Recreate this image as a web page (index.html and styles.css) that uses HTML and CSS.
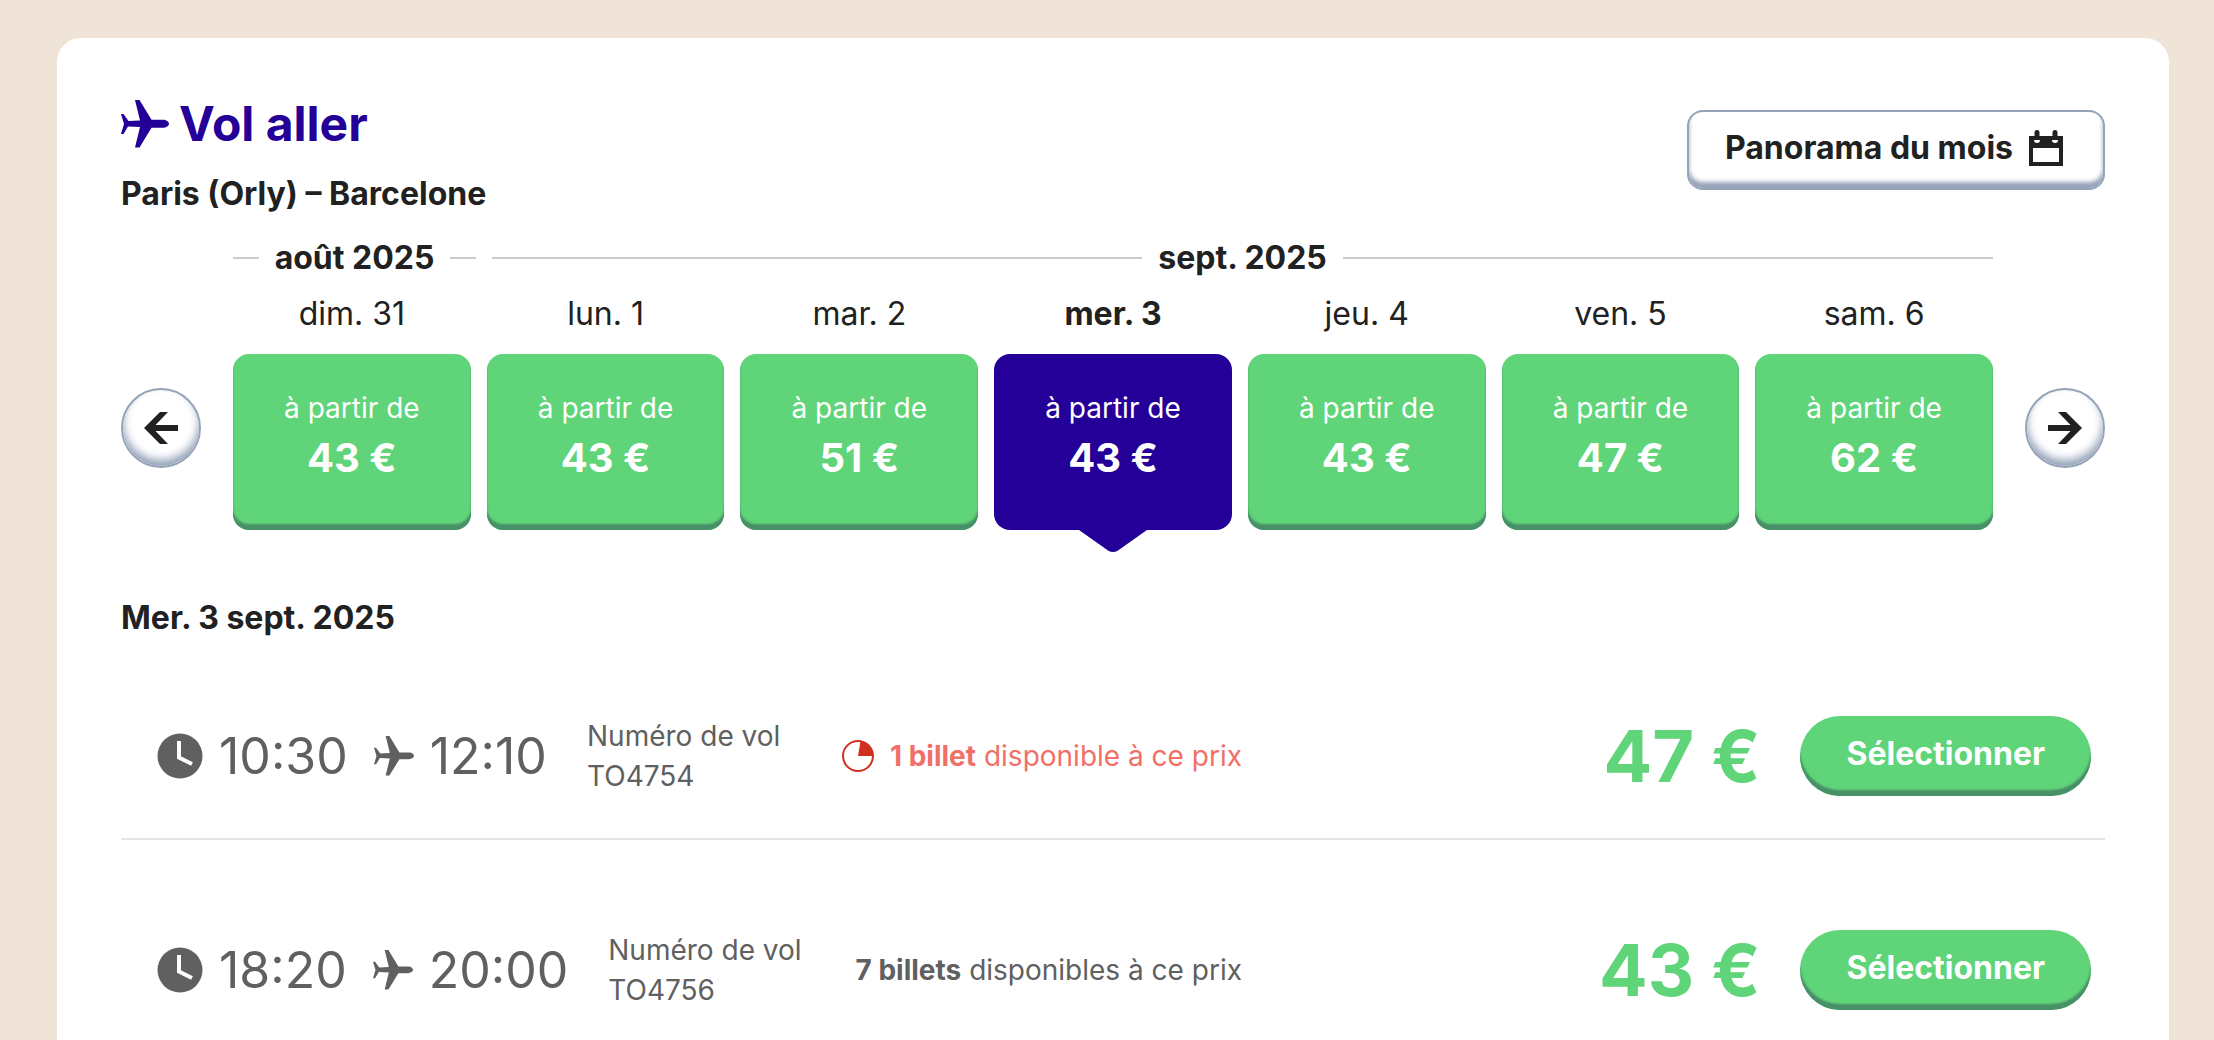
FILE: index.html
```html
<!DOCTYPE html>
<html lang="fr">
<head>
  <meta charset="UTF-8">
  <meta name="viewport" content="width=device-width, initial-scale=1.0">
  <title>Vol aller</title>
  <link rel="stylesheet" href="styles.css">
</head>
<body>
  <!-- Shared icons -->
  <svg class="sprite" aria-hidden="true">
    <symbol id="plane" viewBox="0 0 48 48">
      <path d="M14 0h4.500L30.500 19.800 42 19.800C45 19.900 48 21.500 48 23.800S45 27.700 42 27.800H30.500L18.500 47.500H14L19 27 7 26.400 2.500 34H0L3 24 0 14H2.500L7.500 21 19 20.400z"/>
    </symbol>
    <symbol id="clock" viewBox="0 0 46 46">
      <circle cx="23" cy="23" r="22.500"/>
      <path d="M22 8v16.500L35 31" fill="none" stroke="#fff" stroke-width="4"/>
    </symbol>
  </svg>

  <main class="card">
    <header class="header">
      <div>
        <h1><svg class="plane-big" aria-hidden="true"><use href="#plane"/></svg>Vol aller</h1>
        <p class="route">Paris (Orly) – Barcelone</p>
      </div>
      <button class="btn-month" type="button">
        Panorama du mois
        <svg viewBox="0 0 34 36" aria-hidden="true">
          <path fill-rule="evenodd" d="M0 6h34v30H0zM4 18v14h26V18z"/>
          <path d="M5 10a3 3 0 0 0 6 0M23 10a3 3 0 0 0 6 0" fill="#fff"/>
          <path d="M5.500 2.500a2.500 2.500 0 0 1 5 0V10h-5zM23.500 2.500a2.500 2.500 0 0 1 5 0V10h-5z"/>
        </svg>
      </button>
    </header>

    <section class="calendar">
      <button class="arrow" type="button" aria-label="Jours précédents">
        <svg viewBox="0 0 34 34" aria-hidden="true"><path d="M34 14v6H11.500L24 33h-8L0 17 16 1h8L11.500 14z"/></svg>
      </button>
      <div class="week">
        <div class="months">
          <div class="month">août 2025</div>
          <div class="month">sept. 2025</div>
        </div>
        <div class="days">
          <div class="day">
            <span class="day-name">dim. 31</span>
            <button class="fare" type="button">à partir de <strong>43 €</strong></button>
          </div>
          <div class="day">
            <span class="day-name">lun. 1</span>
            <button class="fare" type="button">à partir de <strong>43 €</strong></button>
          </div>
          <div class="day">
            <span class="day-name">mar. 2</span>
            <button class="fare" type="button">à partir de <strong>51 €</strong></button>
          </div>
          <div class="day selected">
            <span class="day-name">mer. 3</span>
            <button class="fare" type="button">à partir de <strong>43 €</strong>
              <svg class="pointer" viewBox="0 0 68 22" aria-hidden="true"><path d="M0 0h68L39 20.500q-5 3-10 0z"/></svg>
            </button>
          </div>
          <div class="day">
            <span class="day-name">jeu. 4</span>
            <button class="fare" type="button">à partir de <strong>43 €</strong></button>
          </div>
          <div class="day">
            <span class="day-name">ven. 5</span>
            <button class="fare" type="button">à partir de <strong>47 €</strong></button>
          </div>
          <div class="day">
            <span class="day-name">sam. 6</span>
            <button class="fare" type="button">à partir de <strong>62 €</strong></button>
          </div>
        </div>
      </div>
      <button class="arrow" type="button" aria-label="Jours suivants">
        <svg viewBox="0 0 34 34" aria-hidden="true"><path d="M0 14v6h22.500L10 33h8l16-16L18 1h-8l12.500 13z"/></svg>
      </button>
    </section>

    <h2>Mer. 3 sept. 2025</h2>

    <ul class="flights">
      <li class="flight">
        <div class="info">
          <div class="times">
            <svg class="clock" aria-hidden="true"><use href="#clock"/></svg>
            <span>10:30</span>
            <svg class="plane" aria-hidden="true"><use href="#plane"/></svg>
            <span>12:10</span>
          </div>
          <div class="number">Numéro de vol<br>TO4754</div>
          <div class="tickets last">
            <svg viewBox="0 0 32 32" aria-hidden="true">
              <circle cx="16" cy="16" r="15"/>
              <path d="M16 16L18.500 1A15 15 0 0 1 31 16z"/>
            </svg>
            <span><strong>1 billet</strong> disponible à ce prix</span>
          </div>
        </div>
        <div class="price">47 €</div>
        <button class="btn-select" type="button">Sélectionner</button>
      </li>
      <li class="flight">
        <div class="info">
          <div class="times">
            <svg class="clock" aria-hidden="true"><use href="#clock"/></svg>
            <span>18:20</span>
            <svg class="plane" aria-hidden="true"><use href="#plane"/></svg>
            <span>20:00</span>
          </div>
          <div class="number">Numéro de vol<br>TO4756</div>
          <div class="tickets">
            <span><strong>7 billets</strong> disponibles à ce prix</span>
          </div>
        </div>
        <div class="price">43 €</div>
        <button class="btn-select" type="button">Sélectionner</button>
      </li>
    </ul>
  </main>
</body>
</html>
```
FILE: styles.css
```css
* {
  box-sizing: border-box;
}
body {
  margin: 0;
  padding: 38px 45px 0 57px;
  background-color: #f0e4d8;
  color: #212121;
  font-family: Inter, "Open Sans", sans-serif;
  font-size: 32px;
  line-height: 40px;
}
h1, h2, p, ul {
  margin: 0;
  padding: 0;
}
button {
  border: none;
  font: inherit;
  color: inherit;
  cursor: pointer;
}
svg {
  flex-shrink: 0;
  fill: currentColor;
}
.sprite {
  display: none;
}
.card {
  background-color: #fff;
  border-radius: 24px;
  padding: 56px 64px 64px;
}

/* Header */
.header {
  display: flex;
  justify-content: space-between;
  align-items: center;
}
h1 {
  display: flex;
  align-items: center;
  gap: 10px;
  color: #240099;
  font-size: 48px;
  line-height: 60px;
}
.plane-big {
  width: 48px;
  height: 48px;
}
.route {
  margin-top: 20px;
  font-weight: 700;
}
.btn-month {
  display: flex;
  align-items: center;
  gap: 16px;
  height: 80px;
  margin-bottom: 8px;
  padding: 0 40px 4px 36px;
  background-color: #fff;
  border: 2px solid #94a3b8;
  border-radius: 16px;
  box-shadow: inset 0 -6px 4px #94a3b8;
  font-weight: 700;
}
.btn-month svg {
  width: 34px;
  height: 36px;
}

/* Days */
.calendar {
  display: flex;
  align-items: flex-end;
  gap: 32px;
  margin-top: 24px;
}
.arrow {
  display: flex;
  align-items: center;
  justify-content: center;
  flex-shrink: 0;
  width: 80px;
  height: 80px;
  margin-bottom: 62px;
  padding: 0;
  background-color: #fff;
  border: 2px solid #94a3b8;
  border-radius: 50%;
  box-shadow: inset 0 -6px 8px #94a3b8;
}
.arrow svg {
  width: 34px;
  height: 34px;
}
.week {
  flex: 1;
}
.months {
  display: grid;
  grid-template-columns: 243px 1fr;
  gap: 16px;
}
.month {
  display: flex;
  align-items: center;
  gap: 16px;
  font-weight: 700;
  white-space: nowrap;
}
.month::before, .month::after {
  content: "";
  flex: 1;
  height: 2px;
  background-color: #ccc;
}
.days {
  display: grid;
  grid-template-columns: repeat(7, 1fr);
  gap: 16px;
  margin-top: 16px;
}
.day {
  text-align: center;
}
.day-name {
  display: block;
  margin-bottom: 20px;
}
.fare {
  display: block;
  position: relative;
  width: 100%;
  height: 176px;
  padding: 0 0 16px;
  background-color: #60d478;
  border-radius: 16px;
  box-shadow: inset 0 -6px 2px #489068;
  color: #fff;
  font-size: 28px;
}
.fare strong {
  display: block;
  margin-top: 8px;
  font-size: 40px;
  line-height: 44px;
}
.selected .day-name {
  font-weight: 700;
}
.selected .fare {
  background-color: #240099;
  box-shadow: none;
}
.pointer {
  position: absolute;
  top: 100%;
  left: calc(50% - 34px);
  width: 68px;
  height: 22px;
  fill: #240099;
}

/* Flights */
h2 {
  margin-top: 68px;
  font-size: 32px;
}
.flights {
  list-style: none;
}
.flight {
  display: flex;
  align-items: center;
  gap: 40px;
  padding: 90px 14px 42px 36px;
  color: #606060;
  font-size: 28px;
}
.flight:first-child {
  padding-top: 78px;
  border-bottom: 2px solid #e5e5e5;
}
.info {
  display: flex;
  align-items: center;
  flex: 0 1 1085px;
}
.times {
  display: flex;
  align-items: center;
  gap: 16px;
  min-width: 390px;
  font-size: 50px;
}
.clock {
  width: 46px;
  height: 46px;
}
.plane {
  width: 40px;
  height: 40px;
  margin-left: 10px;
}
.number {
  margin-left: 40px;
}
.tickets {
  display: flex;
  align-items: center;
  gap: 16px;
  margin-left: auto;
}
.tickets svg {
  width: 32px;
  height: 32px;
  fill: #d03020;
}
.tickets circle {
  fill: none;
  stroke: #d03020;
  stroke-width: 2;
}
.last {
  color: #f07068;
}
.price {
  margin-left: auto;
  color: #60d478;
  font-size: 72px;
  font-weight: 700;
  line-height: 80px;
}
.btn-select {
  height: 80px;
  padding: 0 46px 4px;
  background-color: #60d478;
  border-radius: 40px;
  box-shadow: inset 0 -6px 2px #489068;
  color: #fff;
  font-size: 32px;
  font-weight: 700;
}
```
